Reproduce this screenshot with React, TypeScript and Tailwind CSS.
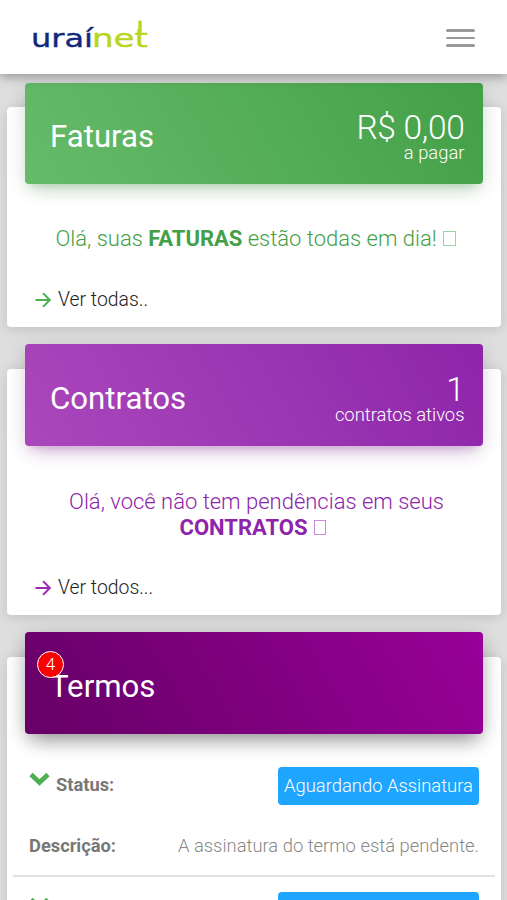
import type { ReactNode } from "react";
import clsx from "clsx";

const terms = [
  { status: "Aguardando Assinatura", description: "A assinatura do termo está pendente." },
  { status: "Aguardando Assinatura", description: "A assinatura do termo está pendente." },
];

function Logo() {
  return (
    <svg width="120" height="34" viewBox="0 0 120 34" role="img" aria-label="uraínet">
      <g fontFamily="'DejaVu Sans', sans-serif" fontSize="25.5" strokeWidth="0.4">
        <text x="-1" y="26.5" fill="#10297c" stroke="#10297c" textLength="62" lengthAdjust="spacingAndGlyphs">
          uraí
        </text>
        <text x="60" y="26.5" fill="#b9d61f" stroke="#b9d61f" textLength="56" lengthAdjust="spacingAndGlyphs">
          net
        </text>
      </g>
      {/* tall stem of the last letter */}
      <rect x="106.3" y="0.5" width="3.4" height="12" rx="1" fill="#b9d61f" />
    </svg>
  );
}

function Navbar() {
  return (
    <header className="relative z-10 flex h-[74px] shrink-0 items-center justify-between bg-white pr-8 pl-8 shadow-[0_3px_10px_rgba(0,0,0,0.32)]">
      <Logo />
      <button aria-label="Menu" className="mt-[2px] flex w-[29px] flex-col gap-[5px]">
        <span className="h-[2.5px] rounded-sm bg-[#999]" />
        <span className="h-[2.5px] rounded-sm bg-[#999]" />
        <span className="h-[2.5px] rounded-sm bg-[#999]" />
      </button>
    </header>
  );
}

type CardProps = {
  title: string;
  headerClass: string;
  value?: string;
  caption?: string;
  badge?: number;
  className?: string;
  children: ReactNode;
};

function Card({ title, headerClass, value, caption, badge, className, children }: CardProps) {
  return (
    <section
      className={clsx(
        "flex shrink-0 flex-col rounded-[4px] bg-white shadow-[0_2px_12px_rgba(0,0,0,0.14)]",
        className
      )}
    >
      <div
        className={clsx(
          "relative mr-[18.5px] ml-[18px] flex shrink-0 items-center justify-between rounded-[4px] pr-[18px] pl-[25px] text-white",
          headerClass
        )}
      >
        <h2 className="mt-[7px] text-[31.2px] leading-9 font-normal">{title}</h2>
        {value && (
          <div className="mt-[9px] flex flex-col items-end font-light">
            <span className="text-[33.5px] leading-[30px] tracking-[-0.3px]">{value}</span>
            <span className="text-[18.4px] leading-5">{caption}</span>
          </div>
        )}
        {badge && (
          <span className="absolute top-[19px] left-[12px] flex size-[27px] items-center justify-center rounded-full border border-white bg-[#fb0000] text-[17px] font-light">
            {badge}
          </span>
        )}
      </div>
      {children}
    </section>
  );
}

// Placeholder box shown where the emoji has no glyph
function MissingGlyph({ className }: { className?: string }) {
  return (
    <span
      className={clsx("ml-px inline-block h-[15px] w-[12.5px] border border-current opacity-50", className)}
    />
  );
}

function MoreLink({ label, arrowClass }: { label: string; arrowClass: string }) {
  return (
    <a href="#" className="ml-[28px] flex items-center gap-[7px] text-[19.4px] leading-6 font-light text-[#222]">
      <svg
        width="16"
        height="16"
        viewBox="0 0 16 16"
        fill="none"
        strokeWidth="1.9"
        className={arrowClass}
      >
        <path d="M0.5 8H14.5M8 1.2L14.8 8L8 14.8" />
      </svg>
      <span className="mt-px">{label}</span>
    </a>
  );
}

export default function App() {
  return (
    <div className="flex h-[900px] w-[507px] flex-col overflow-hidden bg-[#dedede] font-['Roboto',sans-serif]">
      <Navbar />
      <main className="flex flex-col gap-[42px] pt-[33px] pr-[6px] pl-[7px]">
        <Card
          title="Faturas"
          value="R$ 0,00"
          caption="a pagar"
          className="h-[220px]"
          headerClass="-mt-[24px] h-[101px] bg-linear-60 from-[#66bb6a] to-[#43a047] shadow-[0_12px_20px_-10px_rgba(76,175,80,0.28),0_4px_20px_rgba(0,0,0,0.12),0_7px_8px_-5px_rgba(76,175,80,0.2)]"
        >
          <p className="mt-[42px] pl-[3px] text-center text-[22px] leading-[26px] font-light text-[#43a047]">
            Olá, suas <b className="font-bold">FATURAS</b> estão todas em dia! <MissingGlyph />
          </p>
          <div className="mt-auto pb-[15px]">
            <MoreLink label="Ver todas.." arrowClass="stroke-[#4caf50]" />
          </div>
        </Card>

        <Card
          title="Contratos"
          value="1"
          caption="contratos ativos"
          className="h-[246px]"
          headerClass="-mt-[25px] h-[102px] bg-linear-60 from-[#ab47bc] to-[#8e24aa] shadow-[0_12px_20px_-10px_rgba(156,39,176,0.28),0_4px_20px_rgba(0,0,0,0.12),0_7px_8px_-5px_rgba(156,39,176,0.2)]"
        >
          <p className="mt-[43px] pl-[5px] text-center text-[22px] leading-[26px] font-light text-[#8e24aa]">
            Olá, você não tem pendências em seus
            <br />
            <b className="font-bold">CONTRATOS</b> <MissingGlyph className="mr-[7px]" />
          </p>
          <div className="mt-auto pb-[15px]">
            <MoreLink label="Ver todos..." arrowClass="stroke-[#9c27b0]" />
          </div>
        </Card>

        <Card
          title="Termos"
          badge={4}
          className="h-[420px]"
          headerClass="-mt-[25px] h-[102px] bg-linear-60 from-[#660066] to-[#990099] shadow-[0_10px_20px_-6px_rgba(0,0,0,0.4),0_4px_20px_rgba(0,0,0,0.14)]"
        >
          <ul className="mt-[24px] px-[6px] text-[18.3px]">
            {terms.map((term, i) => (
              <li key={i} className="mb-[6px] h-[119px] border-b-2 border-[#e2e2e2] px-4 pt-[9px]">
                <div className="flex h-[38px] items-center justify-between">
                  <div className="-mt-[3px] flex items-center gap-[6px] font-bold text-[#777]">
                    <svg width="21" height="14" viewBox="0 0 21 14" className="-mt-[12px]">
                      <path d="M2 2.5L10.5 10.5L19 2.5" fill="none" stroke="#4caf50" strokeWidth="4.8" />
                    </svg>
                    Status:
                  </div>
                  <span className="flex h-[38px] w-[201px] items-center justify-center rounded-[4px] bg-[#1ea5ff] text-[18.4px] font-light text-white">
                    {term.status}
                  </span>
                </div>
                <div className="mt-[29px] flex items-center justify-between leading-6">
                  <span className="font-bold text-[#777]">Descrição:</span>
                  <span className="text-[18.4px] font-light text-[#888]">{term.description}</span>
                </div>
              </li>
            ))}
          </ul>
        </Card>
      </main>
    </div>
  );
}
